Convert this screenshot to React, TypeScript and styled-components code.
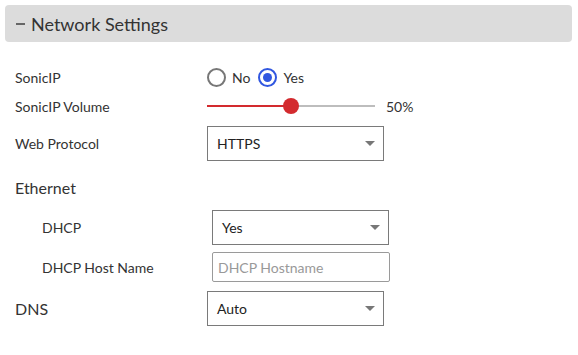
import React from "react";
import styled, { createGlobalStyle } from "styled-components";

const Global = createGlobalStyle`
  html, body { margin: 0; padding: 0; background: #fff; }
  body { font-family: Lato, "Noto Sans", sans-serif; color: #333; }
`;

const Page = styled.div`
  width: 578px;
  height: 355px;
  overflow: hidden;
`;

const Header = styled.div`
  margin: 5px 6px 0 5px;
  height: 37px;
  background: #dcdcdc;
  border-radius: 4px;
  display: flex;
  align-items: center;
  padding-left: 11px;
  font-size: 18px;
  color: #333;
  gap: 6px;
`;

const Dash = styled.span`
  display: inline-block;
  width: 9px;
  height: 2px;
  background: #666;
`;

const Form = styled.div`
  padding-left: 15px;
  display: flex;
  flex-direction: column;
`;

const Row = styled.div<{ $mt: number; $h: number; $label: number }>`
  margin-top: ${(p) => p.$mt}px;
  height: ${(p) => p.$h}px;
  display: grid;
  grid-template-columns: ${(p) => p.$label}px auto;
  align-items: center;
`;

const Group = styled.div`
  padding-left: 27px;
  display: flex;
  flex-direction: column;
`;

const Label = styled.div<{ $size?: number }>`
  font-size: ${(p) => p.$size ?? 14}px;
  color: #333;
  white-space: nowrap;
`;

const Radios = styled.div`
  display: flex;
  align-items: center;
  gap: 6px;
  font-size: 14px;
  color: #333;
`;

const RadioItem = styled.label`
  display: flex;
  align-items: center;
  gap: 6px;
  margin-right: 2px;
`;

const RadioCircle = styled.span<{ $on?: boolean }>`
  box-sizing: border-box;
  width: 19px;
  height: 19px;
  border-radius: 50%;
  border: 2px solid ${(p) => (p.$on ? "#3157e0" : "#777")};
  display: flex;
  align-items: center;
  justify-content: center;
  &::after {
    content: "";
    display: ${(p) => (p.$on ? "block" : "none")};
    width: 9px;
    height: 9px;
    border-radius: 50%;
    background: #3157e0;
  }
`;

const SliderWrap = styled.div`
  display: flex;
  align-items: center;
  gap: 11px;
  font-size: 14px;
  color: #333;
`;

const Track = styled.div`
  position: relative;
  width: 168px;
  height: 2px;
  background: #bdbdbd;
`;

const Fill = styled.div`
  position: absolute;
  left: 0;
  top: 0;
  height: 2px;
  background: #d32a2e;
`;

const Thumb = styled.div`
  position: absolute;
  top: 50%;
  width: 16px;
  height: 16px;
  margin-left: -8px;
  margin-top: -8px;
  border-radius: 50%;
  background: #d32a2e;
`;

const Select = styled.div`
  box-sizing: border-box;
  width: 177px;
  height: 35px;
  border: 1px solid #7a7a7a;
  display: flex;
  align-items: center;
  justify-content: space-between;
  padding: 0 8px 0 9px;
  font-size: 14px;
  color: #222;
`;

const Arrow = styled.span`
  width: 0;
  height: 0;
  border-left: 5px solid transparent;
  border-right: 5px solid transparent;
  border-top: 5px solid #777;
`;

const TextInput = styled.input`
  box-sizing: border-box;
  width: 178px;
  height: 30px;
  border: 1px solid #9a9a9a;
  border-radius: 2px;
  padding: 0 5px;
  font-family: inherit;
  font-size: 14px;
  color: #222;
  outline: none;
  &::placeholder { color: #999; }
`;

function SelectBox({ value }: { value: string }) {
  return (
    <Select>
      <span>{value}</span>
      <Arrow />
    </Select>
  );
}

export default function App() {
  const volume = 50;
  return (
    <Page>
      <Global />
      <Header>
        <Dash />
        <span>Network Settings</span>
      </Header>
      <Form>
        <Row $mt={24} $h={22} $label={192}>
          <Label>SonicIP</Label>
          <Radios>
            <RadioItem>
              <RadioCircle />
              No
            </RadioItem>
            <RadioItem>
              <RadioCircle $on />
              Yes
            </RadioItem>
          </Radios>
        </Row>
        <Row $mt={7} $h={22} $label={192}>
          <Label>SonicIP Volume</Label>
          <SliderWrap>
            <Track>
              <Fill style={{ width: `${volume}%` }} />
              <Thumb style={{ left: `${volume}%` }} />
            </Track>
            <span>{volume}%</span>
          </SliderWrap>
        </Row>
        <Row $mt={9} $h={35} $label={192}>
          <Label>Web Protocol</Label>
          <SelectBox value="HTTPS" />
        </Row>
        <Row $mt={15} $h={22} $label={192}>
          <Label $size={16}>Ethernet</Label>
        </Row>
        <Group>
          <Row $mt={12} $h={35} $label={170}>
            <Label>DHCP</Label>
            <SelectBox value="Yes" />
          </Row>
          <Row $mt={7} $h={30} $label={170}>
            <Label>DHCP Host Name</Label>
            <TextInput placeholder="DHCP Hostname" />
          </Row>
        </Group>
        <Row $mt={9} $h={35} $label={192}>
          <Label $size={16}>DNS</Label>
          <SelectBox value="Auto" />
        </Row>
      </Form>
    </Page>
  );
}
